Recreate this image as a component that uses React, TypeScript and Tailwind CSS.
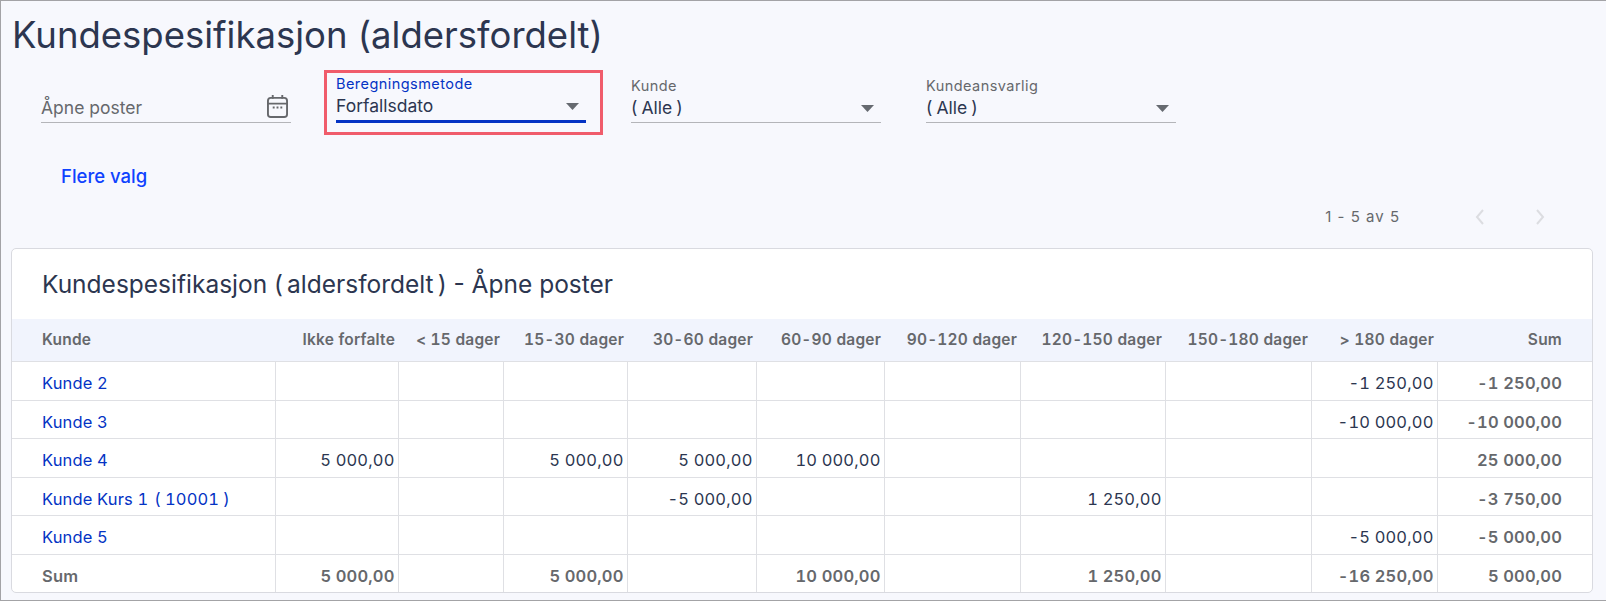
const font = "font-['Inter','Liberation_Sans',sans-serif]";

const columns = [
  { label: 'Kunde', width: 'w-[263px]' },
  { label: 'Ikke forfalte', width: 'w-[123px]' },
  { label: '< 15 dager', width: 'w-[105px]' },
  { label: '15-30 dager', width: 'w-[124px]' },
  { label: '30-60 dager', width: 'w-[129px]' },
  { label: '60-90 dager', width: 'w-[128px]' },
  { label: '90-120 dager', width: 'w-[136px]' },
  { label: '120-150 dager', width: 'w-[145px]' },
  { label: '150-180 dager', width: 'w-[146px]' },
  { label: '> 180 dager', width: 'w-[126px]' },
  { label: 'Sum', width: 'w-[155px]' },
];

const rows = [
  { name: 'Kunde 2', height: 'h-[39px]', values: ['', '', '', '', '', '', '', '', '-1 250,00'], sum: '-1 250,00' },
  { name: 'Kunde 3', height: 'h-[38px]', values: ['', '', '', '', '', '', '', '', '-10 000,00'], sum: '-10 000,00' },
  { name: 'Kunde 4', height: 'h-[39px]', values: ['5 000,00', '', '5 000,00', '5 000,00', '10 000,00', '', '', '', ''], sum: '25 000,00' },
  { name: 'Kunde Kurs 1', code: '10001', height: 'h-[38px]', values: ['', '', '', '-5 000,00', '', '', '1 250,00', '', ''], sum: '-3 750,00' },
  { name: 'Kunde 5', height: 'h-[39px]', values: ['', '', '', '', '', '', '', '', '-5 000,00'], sum: '-5 000,00' },
];

const totals = ['5 000,00', '', '5 000,00', '', '10 000,00', '', '1 250,00', '', '-16 250,00'];

function Parens({ text }: { text: string }) {
  return (
    <>
      <span className="mr-[4px]">(</span>
      {text}
      <span className="ml-[4px]">)</span>
    </>
  );
}

function Caret() {
  return (
    <svg width="13" height="7" viewBox="0 0 13 7" className="shrink-0">
      <path d="M0 0h13L6.5 7z" fill="#666a70" />
    </svg>
  );
}

function SelectField({ label, value, active }: { label: string; value: React.ReactNode; active?: boolean }) {
  return (
    <div className={`flex h-[48px] w-[250px] flex-col justify-end ${active ? 'border-b-[3px] border-[#0433c4]' : 'border-b border-[#b4b5b9]'}`}>
      <div className={`text-[14.5px] leading-[18px] tracking-[0.45px] ${active ? 'text-[#0433c4]' : 'text-[#66686c]'}`}>{label}</div>
      <div className="flex h-[27px] items-center justify-between pr-[7px] text-[17.5px] text-[#2c3650]">
        <span>{value}</span>
        <Caret />
      </div>
    </div>
  );
}

export default function App() {
  return (
    <div className={`${font} h-[601px] w-[1606px] overflow-hidden border-t border-b border-l border-[#a3a3a6] bg-[#f7f8fd]`}>
      <h1 className="pl-[11px] pt-[14px] text-[36.5px] leading-[41px] text-[#2c3650]">Kundespesifikasjon (aldersfordelt)</h1>

      {/* Filters */}
      <div className="mt-[14px] flex items-start pl-[40px]">
        <div className="mt-[5px] flex h-[48px] w-[250px] items-center justify-between border-b border-[#b4b5b9] pt-[20px] pr-[3px] text-[17.5px] text-[#66686c]">
          <span>Åpne poster</span>
          <svg width="21" height="23" viewBox="0 0 22 24" fill="none" stroke="#66686c" strokeWidth="2" className="-mt-[4px]">
            <rect x="1" y="3" width="20" height="20" rx="3" />
            <path d="M1 9h20M6 0v4M16 0v4" />
            <path d="M6 13h2M10 13h2M14 13h2" />
          </svg>
        </div>
        <div className="ml-[33px] border-[3px] border-[#f05c6b] pt-[2px] pr-[14px] pb-[9px] pl-[9px]">
          <SelectField label="Beregningsmetode" value="Forfallsdato" active />
        </div>
        <div className="mt-[5px] ml-[28px] flex gap-[45px]">
          <SelectField label="Kunde" value={<Parens text="Alle" />} />
          <SelectField label="Kundeansvarlig" value={<Parens text="Alle" />} />
        </div>
      </div>

      <div className="mt-[29px] pl-[60px] text-[18.5px] font-medium leading-[24px] text-[#0f42ff]">Flere valg</div>

      {/* Pagination */}
      <div className="mt-[17px] flex h-[24px] items-center justify-end pr-[60px]">
        <span className="text-[15px] tracking-[1px] text-[#66686c]">1 - 5 av 5</span>
        <svg width="12" height="16" viewBox="0 0 12 16" fill="none" stroke="#dcdde1" strokeWidth="2" className="ml-[74px]">
          <path d="M9 1 3 8l6 7" />
        </svg>
        <svg width="12" height="16" viewBox="0 0 12 16" fill="none" stroke="#dcdde1" strokeWidth="2" className="ml-[48px]">
          <path d="m3 1 6 7-6 7" />
        </svg>
      </div>

      {/* Report card */}
      <div className="mt-[19px] ml-[10px] w-[1582px] overflow-hidden rounded-[5px] border border-[#d9dae0] bg-white">
        <div className="flex h-[70px] items-center pl-[30px] text-[24.5px] text-[#2c3650]">
          <span>
            Kundespesifikasjon <Parens text="aldersfordelt" /> - Åpne poster
          </span>
        </div>
        <table className="w-full table-fixed border-collapse text-[16.5px] tracking-[0.15px] tabular-nums">
          <colgroup>
            {columns.map((c) => (
              <col key={c.label} className={c.width} />
            ))}
          </colgroup>
          <thead>
            <tr className="h-[42px] border-b border-[#dfe0e4] bg-[#f1f4fd] text-[15.5px] tracking-[0.2px] text-[#66686c]">
              {columns.map((c, i) => (
                <th key={c.label} className={i === 0 ? 'pl-[30px] text-left font-semibold' : i === 10 ? 'pr-[30px] text-right font-semibold' : 'pr-[3px] text-right font-semibold'}>
                  {c.label}
                </th>
              ))}
            </tr>
          </thead>
          <tbody>
            {rows.map((r) => (
              <tr key={r.name} className={`${r.height} border-b border-[#dfe0e4]`}>
                <td className="border-r border-[#dfe0e4] pt-[6px] pl-[30px] text-[#0433c4]">
                  {r.name}
                  {r.code && (
                    <span className="ml-[6px]">
                      <Parens text={r.code} />
                    </span>
                  )}
                </td>
                {r.values.map((v, i) => (
                  <td key={i} className="border-r border-[#dfe0e4] pt-[6px] pr-[3px] text-right text-[#2c3650]">
                    {v}
                  </td>
                ))}
                <td className="pt-[6px] pr-[30px] text-right font-semibold text-[#66686c]">{r.sum}</td>
              </tr>
            ))}
            <tr className="h-[38px] font-semibold text-[#66686c]">
              <td className="border-r border-[#dfe0e4] pt-[6px] pl-[30px]">Sum</td>
              {totals.map((v, i) => (
                <td key={i} className="border-r border-[#dfe0e4] pt-[6px] pr-[3px] text-right">
                  {v}
                </td>
              ))}
              <td className="pt-[6px] pr-[30px] text-right">5 000,00</td>
            </tr>
          </tbody>
        </table>
      </div>
    </div>
  );
}
